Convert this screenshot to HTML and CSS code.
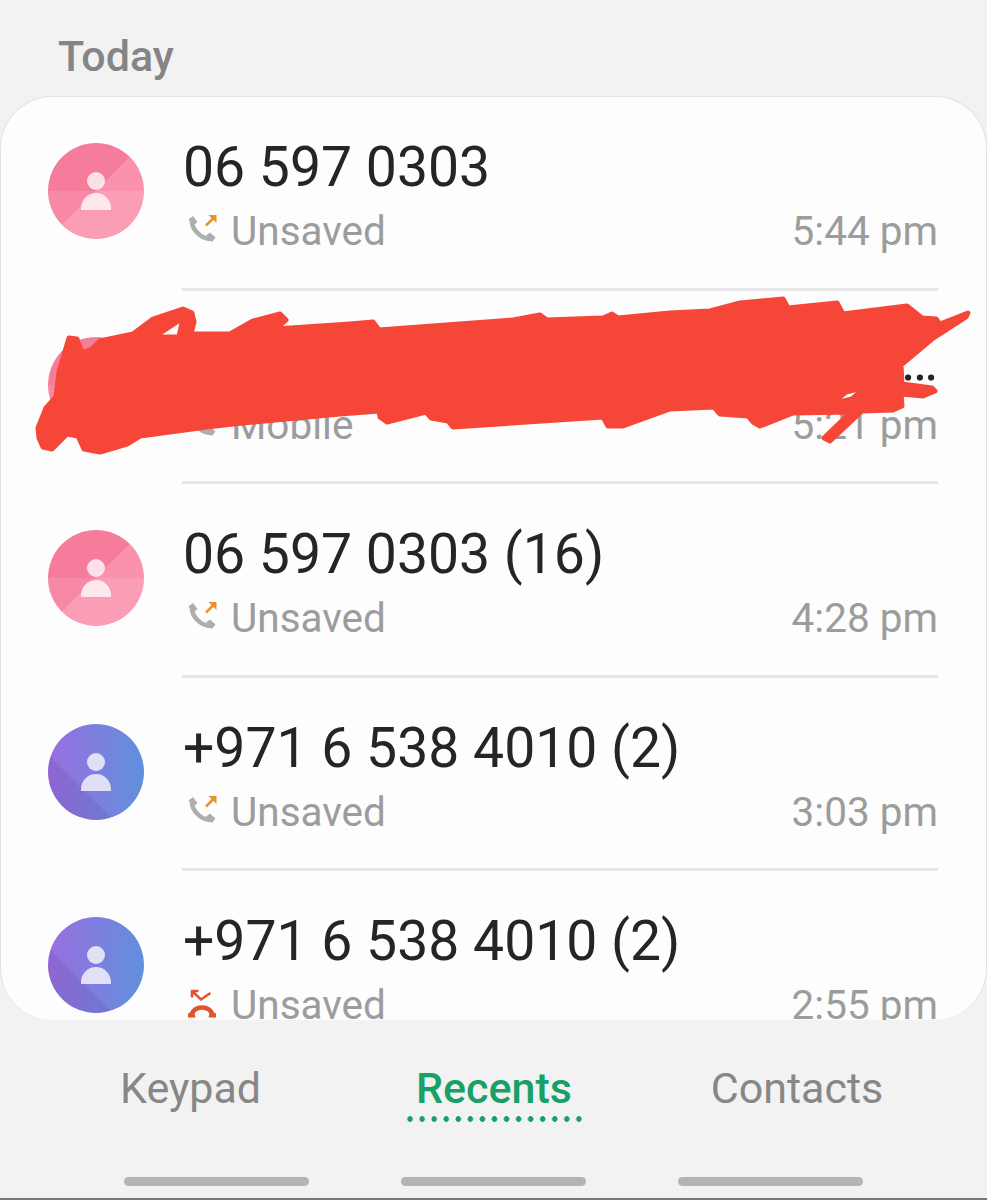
FILE: index.html
```html
<!DOCTYPE html>
<html lang="en">
<head>
    <meta charset="UTF-8">
    <meta name="viewport" content="width=device-width, initial-scale=1.0">
    <title>Recents</title>
    <link rel="stylesheet" href="styles.css">
</head>
<body>
    <svg class="defs" width="0" height="0">
        <symbol id="person" viewBox="0 0 96 96">
            <circle cx="48" cy="38" r="9"/>
            <path d="M33 67v-2a15 15 0 0 1 30 0v2z"/>
        </symbol>
        <symbol id="handset" viewBox="0 0 30 30">
            <path class="handset-line" d="M4 6C3 14 12 25 23 25"/>
            <path class="handset-cap" d="M0.500 5.500 5 2 9.500 8 5.500 11.500zM18 21.500 22 18.500 27.500 23.500 24 28z"/>
        </symbol>
        <symbol id="outgoing" viewBox="0 0 30 30">
            <use href="#handset"/>
            <path class="arrow-out" d="M18 11.500 26 3.500"/>
            <path class="arrow-head" d="M20.500 1h8v8z"/>
        </symbol>
        <symbol id="rejected" viewBox="0 0 30 30">
            <path class="arrow-rejected" d="M4.500 3.500 13 11.500 22.500 5"/>
            <path class="arrow-rejected" d="M4 9.500V3h6.500"/>
            <path class="handset-rejected" d="M3 27C7 17 21 17 25 27"/>
            <path class="cap-rejected" d="M0 25.500 6 23 7.500 29.500H0zM22 23 28 25.500V29.500H20.500z"/>
        </symbol>
    </svg>

    <h2 class="section-title">Today</h2>

    <main class="card">
        <div class="row">
            <div class="avatar pink"><svg class="person"><use href="#person"/></svg></div>
            <div class="row-body">
                <div class="name">06 597 0303</div>
                <div class="meta">
                    <svg class="call-icon"><use href="#outgoing"/></svg>
                    <span class="label">Unsaved</span>
                    <span class="time">5:44 pm</span>
                </div>
            </div>
        </div>
        <div class="row">
            <div class="avatar pink"><svg class="person"><use href="#person"/></svg></div>
            <div class="row-body">
                <div class="name cut">…</div>
                <div class="meta">
                    <svg class="call-icon"><use href="#handset"/></svg>
                    <span class="label">Mobile</span>
                    <span class="time">5:21 pm</span>
                </div>
            </div>
        </div>
        <div class="row">
            <div class="avatar pink"><svg class="person"><use href="#person"/></svg></div>
            <div class="row-body">
                <div class="name">06 597 0303 (16)</div>
                <div class="meta">
                    <svg class="call-icon"><use href="#outgoing"/></svg>
                    <span class="label">Unsaved</span>
                    <span class="time">4:28 pm</span>
                </div>
            </div>
        </div>
        <div class="row">
            <div class="avatar purple"><svg class="person"><use href="#person"/></svg></div>
            <div class="row-body">
                <div class="name">+971 6 538 4010 (2)</div>
                <div class="meta">
                    <svg class="call-icon"><use href="#outgoing"/></svg>
                    <span class="label">Unsaved</span>
                    <span class="time">3:03 pm</span>
                </div>
            </div>
        </div>
        <div class="row">
            <div class="avatar purple"><svg class="person"><use href="#person"/></svg></div>
            <div class="row-body">
                <div class="name">+971 6 538 4010 (2)</div>
                <div class="meta">
                    <svg class="call-icon"><use href="#rejected"/></svg>
                    <span class="label">Unsaved</span>
                    <span class="time">2:55 pm</span>
                </div>
            </div>
        </div>
    </main>

    <nav class="tabs">
        <div class="tab">Keypad</div>
        <div class="tab active">Recents</div>
        <div class="tab">Contacts</div>
    </nav>

    <div class="handles">
        <div class="handle"></div>
        <div class="handle"></div>
        <div class="handle"></div>
    </div>

    <!-- red marker scribble over the second row -->
    <svg class="scribble" width="987" height="1200" viewBox="0 0 987 1200">
        <path fill-rule="evenodd" d="M38 428 46 408 56 397 59 372 69 338 77 339 82 353 92 349 100 341 133 334 153 319 183 309 192 313 194 322 191 334 230 334 253 321 280 314 286 320 276 329 350 324 373 322 379 330 513 320 540 315 547 320 603 318 612 314 618 318 670 313 710 311 740 303 783 299 788 308 837 303 843 314 907 306 922 318 936 319 940 324 968 313 966 317 932 339 901 365 902 384 932 388 935 391 923 396 901 394 902 406 893 410 862 411 830 441 824 438 851 412 793 413 760 426 753 422 748 416 720 414 714 407 670 409 623 426 608 426 603 417 453 427 448 421 431 418 426 412 387 422 380 417 379 411 340 414 233 424 207 427 140 436 127 444 100 452 84 449 78 436 67 434 52 449 43 447 39 438zM831 404 846 392 866 387 852 399zM154 337 183 318 179 337z"/>
    </svg>
</body>
</html>
```

FILE: styles.css
```css
body{
    margin: 0;
    height: 1200px;
    overflow: hidden;
    position: relative;
    background-color: #f2f2f2;
    font-family: Roboto, "Liberation Sans", sans-serif;
}
.defs{
    position: absolute;
}
.section-title{
    margin: 0;
    height: 96px;
    box-sizing: border-box;
    padding: 32px 0 0 58px;
    font-size: 43px;
    line-height: 48px;
    font-weight: 500;
    color: #858585;
}
.card{
    height: 924px;
    box-sizing: border-box;
    overflow: hidden;
    background-color: #fdfdfd;
    border: 1px solid #e2e2e2;
    border-bottom: 0;
    border-radius: 52px;
}
.row{
    display: flex;
    height: 193.600px;
    padding: 0 48px 0 47px;
}
.avatar{
    flex: none;
    width: 96px;
    height: 96px;
    margin-top: 46px;
    margin-right: 38px;
    border-radius: 50%;
}
.pink{
    background:
        linear-gradient(to bottom, rgba(255,255,255,0) 50%, rgba(255,255,255,.1) 50%),
        linear-gradient(135deg, #f67c9b 50%, #fb92ad 50%);
}
.purple{
    background:
        linear-gradient(45deg, rgba(70,50,130,.14) 34%, rgba(70,50,130,0) 34%),
        linear-gradient(to right, #9a6ee0, #6090dc);
}
.person{
    display: block;
    width: 96px;
    height: 96px;
    fill: #fff;
    opacity: .76;
}
.row-body{
    flex: 1;
    min-width: 0;
    padding-top: 41px;
    border-bottom: 3px solid #e6e6e6;
}
.row:last-child .row-body{
    border-bottom: 0;
}
.name{
    font-size: 55.300px;
    line-height: 60px;
    color: #252525;
    padding-left: 1px;
}
.cut{
    text-align: right;
}
.meta{
    display: flex;
    align-items: center;
    margin-top: 10px;
    height: 46px;
    font-size: 40.500px;
    color: #9c9c9c;
}
.call-icon{
    width: 30px;
    height: 30px;
    margin: 0 13px 4px 6px;
}
.time{
    margin-left: auto;
}
.handset-line{
    fill: none;
    stroke: #aeaeae;
    stroke-width: 4.500;
}
.handset-cap{
    fill: #aeaeae;
}
.arrow-out{
    fill: none;
    stroke: #e8922c;
    stroke-width: 2.500;
}
.arrow-head{
    fill: #e8922c;
}
.arrow-rejected{
    fill: none;
    stroke: #e2532c;
    stroke-width: 2.500;
}
.handset-rejected{
    fill: none;
    stroke: #e2532c;
    stroke-width: 4.500;
}
.cap-rejected{
    fill: #e2532c;
}
.tabs{
    display: grid;
    grid-template-columns: 381px 226px 380px;
    padding-top: 44px;
    height: 157px;
    box-sizing: border-box;
}
.tab{
    justify-self: center;
    font-size: 43px;
    line-height: 48px;
    color: #878787;
}
.tab.active{
    color: #17a067;
    font-weight: 500;
}
.tab.active::after{
    content: "";
    display: block;
    height: 6px;
    margin: 4px -10px 0 -12px;
    background-image: radial-gradient(circle, #17a067 2.600px, transparent 3px);
    background-size: 12.070px 6px;
}
.handles{
    display: flex;
    justify-content: center;
    gap: 92px;
    height: 23px;
    box-sizing: border-box;
    border-bottom: 2px solid #777;
}
.handle{
    width: 185px;
    height: 9px;
    border-radius: 5px;
    background-color: #b4b4b4;
}
.scribble{
    position: absolute;
    left: 0;
    top: 0;
    fill: #f54638;
    stroke: #f54638;
    stroke-width: 5;
    stroke-linejoin: round;
}
```
